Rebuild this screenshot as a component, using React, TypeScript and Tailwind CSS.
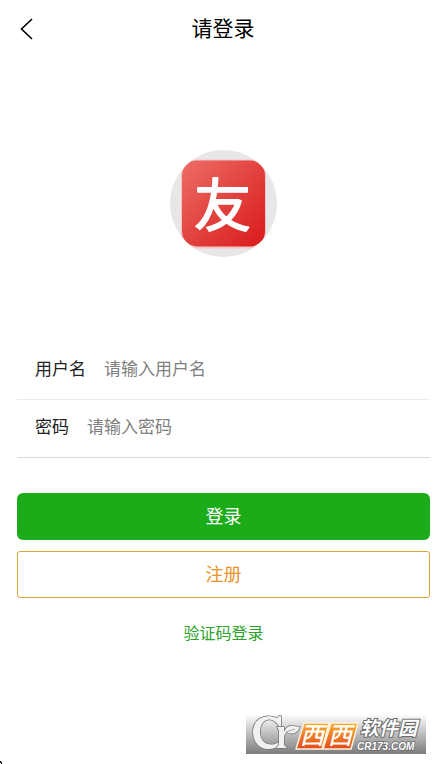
import React from 'react';

const cjk = 'font-["Noto_Sans_CJK_SC","Liberation_Sans",sans-serif]';

function Header() {
  return (
    <header className="grid h-14 grid-cols-[56px_1fr_56px] items-center">
      <button type="button" aria-label="返回" className="flex h-14 items-center pt-0.5 pl-5">
        <svg width="14" height="24" viewBox="0 0 14 24" fill="none" stroke="#000" strokeWidth="1.6">
          <path d="M12 2 1.500 12 12 22" />
        </svg>
      </button>
      <h1 className="pb-0.5 text-center text-[21px] leading-8 text-black">请登录</h1>
    </header>
  );
}

function Avatar() {
  return (
    <svg width="107" height="107" viewBox="0 0 107 107" role="img" aria-label="友">
      <defs>
        <linearGradient id="red" x1="0" y1="0" x2="1" y2="1">
          <stop offset="0" stopColor="#ee6d67" />
          <stop offset="0.5" stopColor="#e2433f" />
          <stop offset="1" stopColor="#da1a1c" />
        </linearGradient>
        <clipPath id="round">
          <circle cx="53.5" cy="53.5" r="53.5" />
        </clipPath>
      </defs>
      <g clipPath="url(#round)">
        <rect width="107" height="107" fill="#e8e7e7" />
        <rect x="11" y="9.5" width="85" height="89" rx="16" fill="#f3c6c4" />
        <rect x="12" y="10.5" width="83" height="86" rx="15" fill="url(#red)" />
        <text
          x="52.500"
          y="76"
          textAnchor="middle"
          fontSize="57"
          fill="#fff"
          stroke="#fff"
          strokeWidth="1.6"
          strokeLinejoin="round"
          fontFamily="Noto Sans CJK SC, sans-serif"
        >
          友
        </text>
      </g>
    </svg>
  );
}

type FieldProps = { id: string; label: string; hint: string; type: string; line: string };

function Field({ id, label, hint, type, line }: FieldProps) {
  return (
    <div className={`flex h-[58px] items-center gap-[18px] border-b pb-1.5 pl-[18px] text-[17px] ${line}`}>
      <label htmlFor={id} className="shrink-0 text-[#222]">{label}</label>
      <input
        id={id}
        type={type}
        placeholder={hint}
        className="min-w-0 flex-1 bg-transparent outline-none placeholder:text-[#808080]"
      />
    </div>
  );
}

function SiteBadge() {
  return (
    <svg className="absolute right-5 bottom-2.5" width="180" height="40" viewBox="0 0 180 40" role="img" aria-label="西西软件园 CR173.COM">
      <defs>
        <linearGradient id="grey" x1="0" y1="0" x2="0" y2="1">
          <stop offset="0" stopColor="#fff" />
          <stop offset="1" stopColor="#7c7c7c" />
        </linearGradient>
        <linearGradient id="orange" x1="0" y1="0" x2="0" y2="1">
          <stop offset="0" stopColor="#f9b02d" />
          <stop offset="1" stopColor="#e5481c" />
        </linearGradient>
      </defs>
      <rect width="180" height="40" fill="url(#grey)" />
      <g fill="#f1f1f1" stroke="#777" strokeWidth="1.5" paintOrder="stroke" strokeLinejoin="round">
        <path d="M35 12V2h-2l-2 2C19-1 7 5 7 18c0 13 11 20 22 16l4-2v-4c-9 6-19 1-19-10C14 7 22 3 28 7c3 2 4 3 5 6z" />
        <path d="M31 13h7v5c2-5 6-7 9-6l7 1c-3 7-9 8-13 5-2 1-3 3-3 6v7l3 3H30l3-3V16z" />
      </g>
      <path d="m40 18 9-3" stroke="#aaa" fill="none" />
      <path d="M58 9h25l-7 26H50z M85 9h27l-7 26H77z" fill="url(#orange)" stroke="#fff3df" strokeWidth="1.5" strokeLinejoin="round" />
      <g fontFamily="Noto Sans CJK SC, sans-serif" fontWeight="700" fontStyle="italic">
        <text x="54" y="30" fontSize="24" fontWeight="500" fill="#fff">西</text>
        <text x="82" y="30" fontSize="24" fontWeight="500" fill="#fff">西</text>
        <text x="114" y="21" fontSize="19" fill="#fff" stroke="#6b6b6b" strokeWidth="2" paintOrder="stroke">软件园</text>
      </g>
      <text
        x="111"
        y="36"
        fontSize="10"
        fontFamily="Liberation Sans, sans-serif"
        fontWeight="700"
        fontStyle="italic"
        fill="#fff"
        stroke="#6b6b6b"
        strokeWidth="1.5"
        paintOrder="stroke"
      >
        CR173.COM
      </text>
    </svg>
  );
}

export default function App() {
  return (
    <div className={`relative min-h-screen bg-white ${cjk}`}>
      <Header />
      <main className="pr-4 pl-[17px]">
        <div className="flex justify-center pt-[94px]">
          <Avatar />
        </div>
        <form className="pt-[85px]" onSubmit={(e) => e.preventDefault()}>
          <Field id="user" label="用户名" hint="请输入用户名" type="text" line="border-[#ececec]" />
          <Field id="pass" label="密码" hint="请输入密码" type="password" line="border-[#dadada]" />
          <div className="flex flex-col gap-[11px] pt-[35px] text-[18px]">
            <button type="submit" className="h-[47px] rounded-md bg-[#1cac1a] pb-0.5 text-white">登录</button>
            <button type="button" className="h-[47px] rounded-[3px] border border-[#dda63f] pb-0.5 text-[#ea9329]">注册</button>
          </div>
          <div className="flex justify-center pt-[22px]">
            <a href="#code" className="text-[16px] leading-6 text-[#2ba32b]">验证码登录</a>
          </div>
        </form>
      </main>
      <SiteBadge />
      <svg className="absolute bottom-0 left-0" width="3" height="3" viewBox="0 0 3 3" aria-hidden="true">
        <path d="M0 0h1v1h1v2H1V2H0z" fill="#111" />
      </svg>
    </div>
  );
}
